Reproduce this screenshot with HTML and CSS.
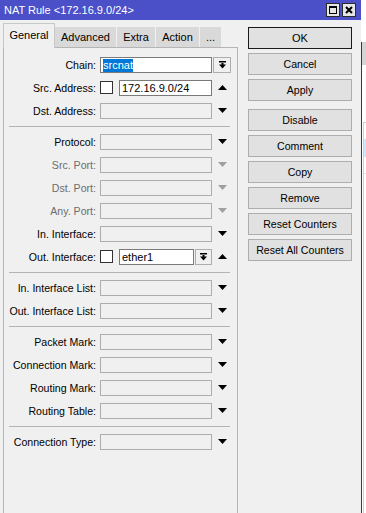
FILE: index.html
```html
<!DOCTYPE html>
<html lang="en">
<head>
    <meta charset="UTF-8">
    <title>NAT Rule</title>
    <link rel="stylesheet" href="styles.css">
</head>
<body>
<div class="screen">
    <div class="window">
        <div class="titlebar">
            <span class="title">NAT Rule &lt;172.16.9.0/24&gt;</span>
            <div class="title-btns">
                <span class="tbtn"><svg width="8" height="8" viewBox="0 0 8 8"><rect x="0.5" y="0.5" width="7" height="7" fill="none" stroke="#000"/><rect x="0" y="0" width="8" height="2" fill="#000"/></svg></span>
                <span class="tbtn"><svg width="8" height="8" viewBox="0 0 8 8"><path d="M1 1 L7 7 M7 1 L1 7" stroke="#000" stroke-width="2"/></svg></span>
            </div>
        </div>
        <div class="main">
            <div class="left">
                <!-- tabs -->
                <div class="tabs">
                    <div class="tab active w-general">General</div>
                    <div class="tab w-advanced">Advanced</div>
                    <div class="tab w-extra">Extra</div>
                    <div class="tab w-action">Action</div>
                    <div class="tab w-more">...</div>
                </div>
                <div class="panel">
                    <div class="row">
                        <span class="lbl">Chain:</span>
                        <span class="box val"><span class="sel">srcnat</span></span>
                        <span class="dd wide"><svg width="7" height="8" viewBox="0 0 7 8"><rect x="0" y="0" width="7" height="1.5" fill="#000"/><rect x="2.5" y="2" width="2" height="2" fill="#000"/><polygon points="0,3.5 7,3.5 3.5,7.5" fill="#000"/></svg></span>
                    </div>
                    <div class="row">
                        <span class="lbl">Src. Address:</span>
                        <span class="check"></span>
                        <span class="box val w-short">172.16.9.0/24</span>
                        <span class="tail"><svg width="9" height="5" viewBox="0 0 9 5"><polygon points="0,5 9,5 4.5,0" fill="#000"/></svg></span>
                    </div>
                    <div class="row">
                        <span class="lbl">Dst. Address:</span>
                        <span class="box"></span>
                        <span class="tail"><svg width="9" height="5" viewBox="0 0 9 5"><polygon points="0,0 9,0 4.5,5" fill="#000"/></svg></span>
                    </div>
                    <div class="sep"><i></i></div>
                    <div class="row">
                        <span class="lbl">Protocol:</span>
                        <span class="box"></span>
                        <span class="tail"><svg width="9" height="5" viewBox="0 0 9 5"><polygon points="0,0 9,0 4.5,5" fill="#000"/></svg></span>
                    </div>
                    <div class="row off">
                        <span class="lbl">Src. Port:</span>
                        <span class="box"></span>
                        <span class="tail"><svg width="9" height="5" viewBox="0 0 9 5"><polygon points="0,0 9,0 4.5,5" fill="#a0a0a0"/></svg></span>
                    </div>
                    <div class="row off">
                        <span class="lbl">Dst. Port:</span>
                        <span class="box"></span>
                        <span class="tail"><svg width="9" height="5" viewBox="0 0 9 5"><polygon points="0,0 9,0 4.5,5" fill="#a0a0a0"/></svg></span>
                    </div>
                    <div class="row off">
                        <span class="lbl">Any. Port:</span>
                        <span class="box"></span>
                        <span class="tail"><svg width="9" height="5" viewBox="0 0 9 5"><polygon points="0,0 9,0 4.5,5" fill="#a0a0a0"/></svg></span>
                    </div>
                    <div class="row">
                        <span class="lbl">In. Interface:</span>
                        <span class="box"></span>
                        <span class="tail"><svg width="9" height="5" viewBox="0 0 9 5"><polygon points="0,0 9,0 4.5,5" fill="#000"/></svg></span>
                    </div>
                    <div class="row">
                        <span class="lbl">Out. Interface:</span>
                        <span class="check"></span>
                        <span class="box val w-tiny">ether1</span>
                        <span class="dd"><svg width="7" height="8" viewBox="0 0 7 8"><rect x="0" y="0" width="7" height="1.5" fill="#000"/><rect x="2.5" y="2" width="2" height="2" fill="#000"/><polygon points="0,3.5 7,3.5 3.5,7.5" fill="#000"/></svg></span>
                        <span class="tail"><svg width="9" height="5" viewBox="0 0 9 5"><polygon points="0,5 9,5 4.5,0" fill="#000"/></svg></span>
                    </div>
                    <div class="sep"><i></i></div>
                    <div class="row">
                        <span class="lbl">In. Interface List:</span>
                        <span class="box"></span>
                        <span class="tail"><svg width="9" height="5" viewBox="0 0 9 5"><polygon points="0,0 9,0 4.5,5" fill="#000"/></svg></span>
                    </div>
                    <div class="row">
                        <span class="lbl">Out. Interface List:</span>
                        <span class="box"></span>
                        <span class="tail"><svg width="9" height="5" viewBox="0 0 9 5"><polygon points="0,0 9,0 4.5,5" fill="#000"/></svg></span>
                    </div>
                    <div class="sep"><i></i></div>
                    <div class="row">
                        <span class="lbl">Packet Mark:</span>
                        <span class="box"></span>
                        <span class="tail"><svg width="9" height="5" viewBox="0 0 9 5"><polygon points="0,0 9,0 4.5,5" fill="#000"/></svg></span>
                    </div>
                    <div class="row">
                        <span class="lbl">Connection Mark:</span>
                        <span class="box"></span>
                        <span class="tail"><svg width="9" height="5" viewBox="0 0 9 5"><polygon points="0,0 9,0 4.5,5" fill="#000"/></svg></span>
                    </div>
                    <div class="row">
                        <span class="lbl">Routing Mark:</span>
                        <span class="box"></span>
                        <span class="tail"><svg width="9" height="5" viewBox="0 0 9 5"><polygon points="0,0 9,0 4.5,5" fill="#000"/></svg></span>
                    </div>
                    <div class="row">
                        <span class="lbl">Routing Table:</span>
                        <span class="box"></span>
                        <span class="tail"><svg width="9" height="5" viewBox="0 0 9 5"><polygon points="0,0 9,0 4.5,5" fill="#000"/></svg></span>
                    </div>
                    <div class="sep"><i></i></div>
                    <div class="row">
                        <span class="lbl">Connection Type:</span>
                        <span class="box"></span>
                        <span class="tail"><svg width="9" height="5" viewBox="0 0 9 5"><polygon points="0,0 9,0 4.5,5" fill="#000"/></svg></span>
                    </div>
                </div>
            </div>

            <!-- action buttons -->
            <div class="right">
                <div class="btn default">OK</div>
                <div class="btn">Cancel</div>
                <div class="btn">Apply</div>
                <div class="btn spaced">Disable</div>
                <div class="btn">Comment</div>
                <div class="btn">Copy</div>
                <div class="btn">Remove</div>
                <div class="btn">Reset Counters</div>
                <div class="btn">Reset All Counters</div>
            </div>
        </div>
    </div>
    <div class="backdrop">
        <div class="bd-top"></div>
        <div class="bd-body">
            <div class="bd-head"></div>
            <div class="bd-gap"></div>
            <div class="bd-list">
                <div class="bd-row"></div>
                <div class="bd-row hl"></div>
                <div class="bd-row"></div>
                <div class="bd-rest"></div>
            </div>
        </div>
    </div>
</div>
</body>
</html>
```

FILE: styles.css
```css
body {
    margin: 0;
    font-family: "Liberation Sans", Arial, sans-serif;
    font-size: 10.6px;
    color: #000;
    background: #fff;
}
.screen {
    display: flex;
    width: 366px;
    height: 513px;
    overflow: hidden;
}
.window {
    width: 361px;
    height: 513px;
    flex-shrink: 0;
    background: #f0f0f0;
    display: flex;
    flex-direction: column;
}
.titlebar {
    height: 20px;
    background: #4b4fc8;
    display: flex;
    align-items: center;
    justify-content: space-between;
    padding: 0 5px 0 4px;
}
.title {
    color: #fff;
    font-size: 11px;
}
.title-btns {
    display: flex;
    gap: 2px;
}
.tbtn {
    width: 14px;
    height: 14px;
    box-sizing: border-box;
    border: 1px solid #2b2b2b;
    background: #e6e6e6;
    display: flex;
    align-items: center;
    justify-content: center;
}
.main {
    flex: 1;
    display: flex;
}
.left {
    width: 238px;
    padding-left: 3px;
    box-sizing: border-box;
    display: flex;
    flex-direction: column;
}
.tabs {
    height: 24px;
    margin-top: 3px;
    display: flex;
    align-items: flex-start;
    position: relative;
    z-index: 1;
}
.tab {
    height: 20px;
    line-height: 20px;
    margin-top: 4px;
    text-align: center;
    background: #d9d9d9;
    border-right: 1px solid #f0f0f0;
    box-sizing: border-box;
    font-size: 11px;
}
.tab.active {
    height: 25px;
    line-height: 23px;
    margin-top: 0;
    background: #f0f0f0;
    border: 1px solid #c8c8c8;
    border-bottom: none;
}
.w-general { width: 52px; }
.w-advanced { width: 62px; }
.w-extra { width: 39px; }
.w-action { width: 44px; }
.w-more { width: 22px; }
.panel {
    flex: 1;
    border: 1px solid #b5b5b5;
    border-bottom: none;
    padding-top: 5px;
}
.row {
    height: 23px;
    display: flex;
    align-items: center;
}
.lbl {
    width: 92px;
    margin-right: 4px;
    text-align: right;
    white-space: nowrap;
}
.off .lbl {
    color: #6d6d6d;
}
.box {
    width: 112px;
    height: 16px;
    box-sizing: border-box;
    border: 1px solid #adadad;
    background: #f0f0f0;
    padding-left: 2px;
    line-height: 14px;
    white-space: nowrap;
    overflow: hidden;
    font-size: 11px;
}
.box.val {
    background: #fff;
    border-color: #7a7a7a;
}
.box.w-short { width: 93px; }
.box.w-tiny { width: 75px; }
.sel {
    display: inline-block;
    background: #0078d7;
    color: #fff;
    line-height: 13px;
}
.check {
    width: 13px;
    height: 13px;
    box-sizing: border-box;
    border: 1px solid #333;
    background: #fff;
    margin-right: 6px;
}
.dd {
    width: 17px;
    height: 16px;
    margin-left: 1px;
    box-sizing: border-box;
    border: 1px solid #adadad;
    background: #f0f0f0;
    display: flex;
    align-items: center;
    justify-content: center;
}
.dd.wide {
    width: 18px;
}
.tail {
    width: 20px;
    display: flex;
    justify-content: center;
}
.sep {
    height: 8px;
    padding: 0 7px 0 5px;
    display: flex;
    align-items: center;
}
.sep i {
    flex: 1;
    height: 1px;
    background: #b4b4b4;
}
.right {
    flex: 1;
    padding: 7px 0 0 10px;
    display: flex;
    flex-direction: column;
    gap: 4px;
}
.btn {
    width: 104px;
    height: 22px;
    box-sizing: border-box;
    border: 1px solid #adadad;
    background: #e1e1e1;
    text-align: center;
    line-height: 20px;
}
.btn.default {
    border-color: #1a1a1a;
    font-size: 11px;
}
.btn.spaced {
    margin-top: 4px;
}
.backdrop {
    flex: 1;
    display: flex;
    flex-direction: column;
}
.bd-top {
    height: 42px;
    background: #fff;
}
.bd-body {
    flex: 1;
    border-left: 1px solid #3a3a3a;
    display: flex;
    flex-direction: column;
}
.bd-head {
    height: 23px;
    background: #d4d4d4;
}
.bd-gap {
    height: 57px;
    background: #fff;
}
.bd-list {
    flex: 1;
    margin-left: 1px;
    border-top: 1px solid #d0d0d0;
    border-left: 1px solid #d0d0d0;
    display: flex;
    flex-direction: column;
}
.bd-row {
    height: 16px;
    border-bottom: 1px solid #e3e3e3;
}
.bd-row.hl {
    background: #cce8ff;
}
.bd-rest {
    height: 90px;
}
```
